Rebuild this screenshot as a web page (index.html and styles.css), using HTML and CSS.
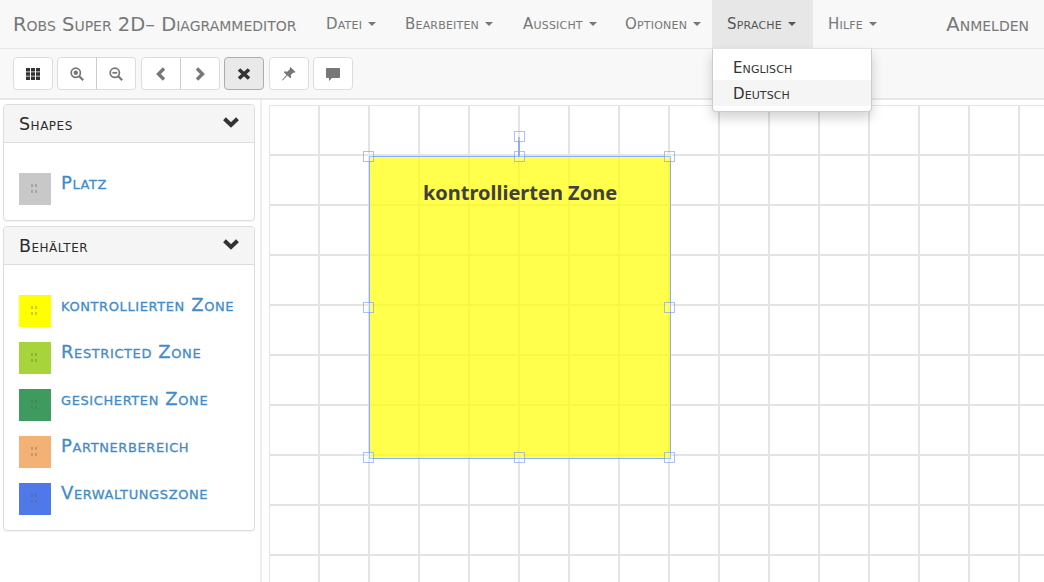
FILE: index.html
```html
<!DOCTYPE html>
<html lang="de">
<head>
    <meta charset="UTF-8">
    <title>Robs Super 2D- Diagrammeditor</title>
    <link rel="stylesheet" href="styles.css">
</head>
<body>
    <nav class="navbar">
        <a class="brand">Robs Super 2D– Diagrammeditor</a>
        <ul class="menu">
            <li class="menu-item w-datei">Datei<span class="caret"></span></li>
            <li class="menu-item w-bearbeiten">Bearbeiten<span class="caret"></span></li>
            <li class="menu-item w-aussicht">Aussicht<span class="caret"></span></li>
            <li class="menu-item w-optionen">Optionen<span class="caret"></span></li>
            <li class="menu-item w-sprache open">Sprache<span class="caret"></span>
                <ul class="dropdown">
                    <li>Englisch</li>
                    <li class="hover">Deutsch</li>
                </ul>
            </li>
            <li class="menu-item">Hilfe<span class="caret"></span></li>
        </ul>
        <a class="login">Anmelden</a>
    </nav>

    <div class="toolbar">
        <button class="btn"><svg class="ico" viewBox="0 0 14 14"><path fill="#333" d="M0 1h4v3.4H0zM5 1h4v3.4H5zM10 1h4v3.4h-4zM0 5.3h4v3.4H0zM5 5.3h4v3.4H5zM10 5.3h4v3.4h-4zM0 9.6h4V13H0zM5 9.6h4V13H5zM10 9.6h4V13h-4z"/></svg></button>
        <div class="btn-group">
            <button class="btn"><svg class="ico" viewBox="0 0 14 14"><circle cx="5.8" cy="5.8" r="4.6" fill="none" stroke="#777" stroke-width="1.7"/><circle cx="5.8" cy="5.8" r="2.2" fill="#777"/><path stroke="#777" stroke-width="2.2" d="M9 9l4.2 4.2"/></svg></button>
            <button class="btn"><svg class="ico" viewBox="0 0 14 14"><circle cx="5.8" cy="5.8" r="4.6" fill="none" stroke="#777" stroke-width="1.7"/><path stroke="#777" stroke-width="1.8" d="M3.4 5.8h4.8"/><path stroke="#777" stroke-width="2.2" d="M9 9l4.2 4.2"/></svg></button>
        </div>
        <div class="btn-group">
            <button class="btn"><svg class="ico" viewBox="0 0 14 14"><path fill="none" stroke="#777" stroke-width="3.4" d="M10 1.5L4.5 7l5.5 5.5"/></svg></button>
            <button class="btn"><svg class="ico" viewBox="0 0 14 14"><path fill="none" stroke="#777" stroke-width="3.4" d="M4 1.5L9.500 7 4 12.500"/></svg></button>
        </div>
        <button class="btn active"><svg class="ico" viewBox="0 0 14 14"><path stroke="#333" stroke-width="3.600" d="M2 2.500l10 9M12 2.500l-10 9"/></svg></button>
        <button class="btn"><svg class="ico" viewBox="0 0 14 14"><path fill="#777" d="M8.500 0l5 5-1 .8-1-.4-2.700 2.500.4 2.400-1 1-2.700-2.800L.6 13.500 0 13l4.500-5-2.700-2.700 1-1 2.400.4L8 2l-.3-1z"/></svg></button>
        <button class="btn"><svg class="ico" viewBox="0 0 14 14"><path fill="#777" d="M1 1h12a1 1 0 0 1 1 1v8a1 1 0 0 1-1 1H6l-3 3v-3H1a1 1 0 0 1-1-1V2a1 1 0 0 1 1-1z"/></svg></button>
    </div>

    <div class="workspace">
        <aside class="sidebar">
            <section class="panel">
                <header class="panel-head">Shapes <svg class="chevron" viewBox="0 0 16 11"><path fill="none" stroke="#333" stroke-width="4" d="M1.500 1.800L8 8l6.500-6.200"/></svg></header>
                <div class="panel-body">
                    <div class="shape"><span class="swatch gray"></span><a>Platz</a></div>
                </div>
            </section>
            <section class="panel">
                <header class="panel-head">Behälter <svg class="chevron" viewBox="0 0 16 11"><path fill="none" stroke="#333" stroke-width="4" d="M1.500 1.800L8 8l6.500-6.200"/></svg></header>
                <div class="panel-body">
                    <div class="shape"><span class="swatch yellow"></span><a>kontrollierten Zone</a></div>
                    <div class="shape"><span class="swatch lime"></span><a>Restricted Zone</a></div>
                    <div class="shape"><span class="swatch green"></span><a>gesicherten Zone</a></div>
                    <div class="shape"><span class="swatch orange"></span><a>Partnerbereich</a></div>
                    <div class="shape"><span class="swatch blue"></span><a>Verwaltungszone</a></div>
                </div>
            </section>
        </aside>

        <main class="canvas">
            <div class="node">
                <div class="node-label">kontrollierten Zone</div>
                <span class="handle tl"></span>
                <span class="handle tc"></span>
                <span class="handle tr"></span>
                <span class="handle ml"></span>
                <span class="handle mr"></span>
                <span class="handle bl"></span>
                <span class="handle bc"></span>
                <span class="handle br"></span>
                <span class="rotate-line"></span>
                <span class="handle rot"></span>
            </div>
        </main>
    </div>
</body>
</html>
```

FILE: styles.css
```css
html, body {
    height: 100%;
    margin: 0;
    overflow: hidden;
}
body {
    display: flex;
    flex-direction: column;
    font-family: "DejaVu Sans", sans-serif;
    font-variant: small-caps;
    background-color: #fff;
}

/* navbar */
.navbar {
    display: flex;
    align-items: center;
    height: 48px;
    flex: none;
    padding: 0 15px 0 13px;
    background-color: #f8f8f8;
    border-bottom: 1px solid #e7e7e7;
    color: #777;
}
.brand {
    width: 298px;
    font-size: 19.500px;
    white-space: nowrap;
    flex: none;
}
.menu {
    display: flex;
    height: 100%;
    margin: 0;
    padding: 0;
    list-style: none;
}
.menu-item {
    position: relative;
    display: flex;
    align-items: center;
    padding: 0 15px;
    font-size: 15px;
    letter-spacing: 0.2px;
    color: #777;
    white-space: nowrap;
}
.w-datei { width: 49px; }
.w-bearbeiten { width: 88px; }
.w-aussicht { width: 72px; }
.w-optionen { width: 72px; }
.w-sprache { width: 71px; }
.menu-item.open {
    background-color: #e7e7e7;
    color: #555;
}
.caret {
    width: 0;
    height: 0;
    margin-left: 6px;
    border-top: 4px solid #777;
    border-left: 4px solid transparent;
    border-right: 4px solid transparent;
}
.open .caret {
    border-top-color: #555;
}
.login {
    margin-left: auto;
    font-size: 19.500px;
    white-space: nowrap;
}
.dropdown {
    position: absolute;
    top: 49px;
    left: 0;
    z-index: 10;
    width: 158px;
    margin: 0;
    padding: 5px 0;
    list-style: none;
    background-color: #fff;
    border: 1px solid #ccc;
    border-top: 0;
    border-radius: 0 0 4px 4px;
    box-shadow: 0 6px 12px rgba(0, 0, 0, .175);
    font-size: 15px;
    letter-spacing: 0.1px;
    color: #333;
}
.dropdown li {
    height: 26px;
    line-height: 28px;
    padding-left: 20px;
}
.dropdown .hover {
    background-color: #f5f5f5;
}

/* toolbar */
.toolbar {
    display: flex;
    align-items: center;
    gap: 4.4px;
    flex: none;
    height: 51px;
    padding: 0 13px;
    box-sizing: border-box;
    background-color: #f8f8f8;
    border-bottom: 2px solid #e7e7e7;
}
.btn {
    display: flex;
    align-items: center;
    justify-content: center;
    width: 40px;
    height: 33px;
    padding: 0;
    background-color: #fff;
    border: 1px solid #ddd;
    border-radius: 4px;
}
.btn.active {
    background-color: #e9e9e9;
    border-color: #adadad;
}
.btn-group {
    display: flex;
}
.btn-group .btn:first-child {
    border-radius: 4px 0 0 4px;
}
.btn-group .btn:last-child {
    margin-left: -1px;
    border-left-color: #ccc;
    border-radius: 0 4px 4px 0;
}
.ico {
    width: 14px;
    height: 14px;
}

/* sidebar */
.workspace {
    display: flex;
    flex: 1;
    min-height: 0;
}
.sidebar {
    flex: none;
    width: 252px;
    padding: 4px 5px 0 3px;
    border-right: 2px solid #eee;
}
.panel {
    margin-bottom: 5px;
    background-color: #fff;
    border: 1px solid #ddd;
    border-radius: 4px;
    box-shadow: 0 1px 1px rgba(0, 0, 0, .05);
}
.panel-head {
    display: flex;
    align-items: center;
    justify-content: space-between;
    height: 37px;
    padding: 0 15px;
    background-color: #f5f5f5;
    border-bottom: 1px solid #ddd;
    border-radius: 3px 3px 0 0;
    font-size: 17.500px;
    letter-spacing: 0.5px;
    color: #2b2b2b;
}
.chevron {
    width: 16px;
    height: 11px;
    margin-bottom: 3px;
}
.panel-body {
    padding: 30px 15px 15px;
}
.shape {
    display: flex;
    align-items: flex-start;
    gap: 10px;
    height: 32px;
    margin-bottom: 15px;
}
.shape:last-child {
    margin-bottom: 0;
}
.shape a {
    font-size: 18px;
    letter-spacing: 0.6px;
    line-height: 20px;
    color: #428bca;
    -webkit-text-stroke: 0.3px #428bca;
    white-space: nowrap;
}
.swatch {
    position: relative;
    flex: none;
    width: 32px;
    height: 32px;
}
/* drag grip in the swatch */
.swatch::after {
    content: "";
    position: absolute;
    left: 12px;
    top: 11px;
    width: 2px;
    height: 3px;
    background-color: rgba(90, 90, 90, .3);
    box-shadow: 4px 0 rgba(90, 90, 90, .3), 0 6px rgba(90, 90, 90, .3), 4px 6px rgba(90, 90, 90, .3);
}
.gray { background-color: #c8c8c8; }
.yellow { background-color: #ffff00; }
.lime { background-color: #a6d43a; }
.green { background-color: #3f9a5f; }
.orange { background-color: #f4b175; }
.blue { background-color: #4f79e8; }

/* canvas */
.canvas {
    position: relative;
    flex: 1;
    margin: 5px 0 0 7px;
    overflow: hidden;
    background-image:
        linear-gradient(to right, #e4e4e4 2px, transparent 2px),
        linear-gradient(to bottom, #e4e4e4 2px, transparent 2px);
    background-size: 50px 50px;
    background-position: -1px -1px;
}
.node {
    position: absolute;
    left: 100px;
    top: 51px;
    width: 300px;
    height: 301px;
    background-color: rgba(255, 255, 0, .7);
    border: 1px solid #8aaeff;
}
.node-label {
    margin-top: 24px;
    text-align: center;
    font-family: "Noto Sans", sans-serif;
    font-variant: normal;
    font-size: 20px;
    font-weight: bold;
    line-height: 24px;
    color: #404040;
}
.handle {
    position: absolute;
    width: 9px;
    height: 9px;
    border: 1px solid rgba(100, 140, 255, .55);
    background-color: rgba(255, 255, 255, .2);
}
.tl { left: -7px; top: -6px; }
.tc { left: 144px; top: -6px; }
.tr { right: -5px; top: -6px; }
.ml { left: -7px; top: 145px; }
.mr { right: -5px; top: 145px; }
.bl { left: -7px; bottom: -5px; }
.bc { left: 144px; bottom: -5px; }
.br { right: -5px; bottom: -5px; }
.rot { left: 144px; top: -26px; }
.rotate-line {
    position: absolute;
    left: 148px;
    top: -20px;
    width: 2px;
    height: 20px;
    background-color: #8aaeff;
}
```
